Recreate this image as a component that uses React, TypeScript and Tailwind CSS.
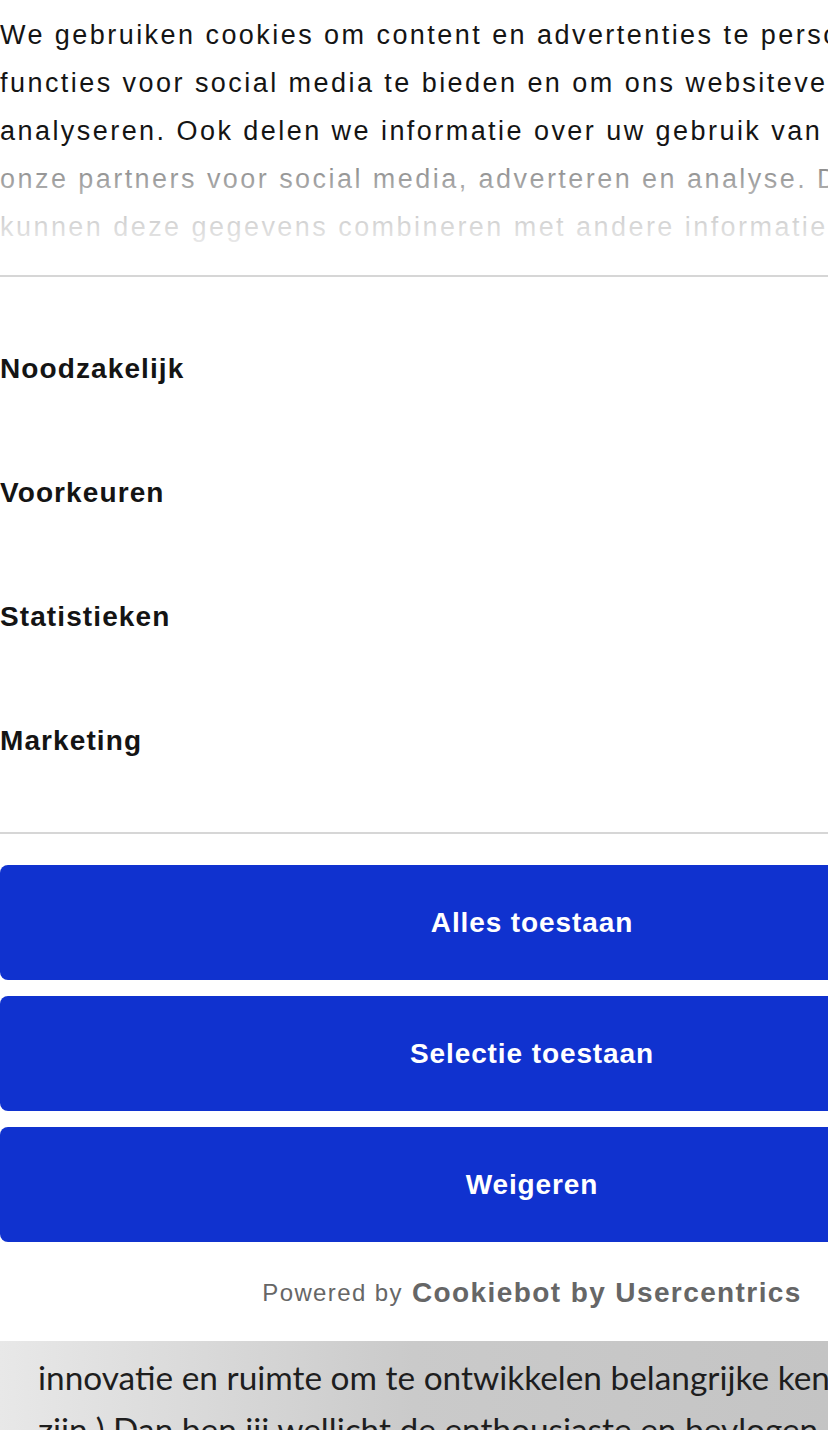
const categories = ['Noodzakelijk', 'Voorkeuren', 'Statistieken', 'Marketing'];
const actions = ['Alles toestaan', 'Selectie toestaan', 'Weigeren'];

const intro = [
  'We gebruiken cookies om content en advertenties te personaliseren, om',
  'functies voor social media te bieden en om ons websiteverkeer te',
  'analyseren. Ook delen we informatie over uw gebruik van onze site met',
  'onze partners voor social media, adverteren en analyse. Deze partners',
  'kunnen deze gegevens combineren met andere informatie die u aan ze heeft',
];

const App = () => {
  return (
    <div className="w-[828px] h-[1430px] overflow-hidden bg-white font-['Liberation_Sans',Arial,sans-serif]">
      <div className="w-[1064px] bg-white">
        {/* intro text, fades out at the bottom */}
        <div className="relative pt-[11px] pb-[24px]">
          {intro.map((line) => (
            <p key={line} className="text-[27px] leading-[48px] tracking-[2.45px] text-[#141414] whitespace-nowrap">
              {line}
            </p>
          ))}
          <div className="absolute left-0 right-0 top-[148px] h-[117px] bg-gradient-to-b from-white/40 via-white/75 to-white" />
        </div>
        <div className="h-[2px] bg-[#d6d6d6]" />

        <div className="flex flex-col pt-[30px]">
          {categories.map((c) => (
            <div key={c} className="h-[124px] flex items-center">
              <span className="text-[28px] leading-[48px] tracking-[1.1px] font-bold text-[#141414]">{c}</span>
            </div>
          ))}
        </div>
        <div className="h-[2px] bg-[#d6d6d6] mt-[29px]" />

        <div className="flex flex-col gap-[16px] pt-[31px]">
          {actions.map((a) => (
            <button
              key={a}
              className="h-[115px] w-full rounded-[8px] bg-[#1032cf] text-white text-[28px] tracking-[0.9px] font-bold"
            >
              {a}
            </button>
          ))}
        </div>

        <div className="h-[99px] flex items-center justify-center gap-[9px] text-[#666666] pt-[2px]">
          <span className="text-[24px] tracking-[1.4px]">Powered by</span>
          <span className="text-[28px] tracking-[1.4px] font-bold">Cookiebot by Usercentrics</span>
        </div>
      </div>

      <div className="h-[200px] bg-gradient-to-r from-[#e8e8e8] via-[#cacaca] to-[#c4c4c4] pl-[38px] pt-[10px] font-['Lato',sans-serif] text-[33.4px] leading-[52px] text-[#1e1e1e] whitespace-nowrap">
        <p>innovatie en ruimte om te ontwikkelen belangrijke kenmerken</p>
        <p>zijn.) Dan ben jij wellicht de enthousiaste en bevlogen collega</p>
      </div>
    </div>
  );
};

export default App;
